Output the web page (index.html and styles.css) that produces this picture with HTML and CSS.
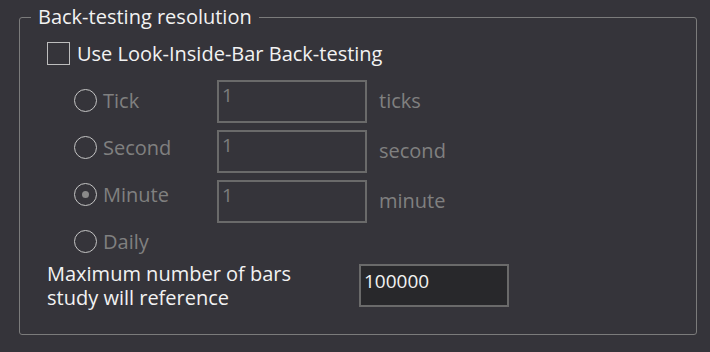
FILE: index.html
```html
<!DOCTYPE html>
<html lang="en">

<head>
    <meta charset="UTF-8">
    <title>Back-testing resolution</title>
    <link rel="stylesheet" href="styles.css">
</head>

<body>

    <fieldset class="group">
        <legend>Back-testing resolution</legend>

        <!-- Look inside bar -->
        <label class="check-row">
            <span class="checkbox"></span>
            <span>Use Look-Inside-Bar Back-testing</span>
        </label>

        <!-- Resolution options (disabled) -->
        <div class="modes">
            <div class="radios">
                <div class="radio-item"><span class="radio"></span>Tick</div>
                <div class="radio-item"><span class="radio"></span>Second</div>
                <div class="radio-item"><span class="radio checked"></span>Minute</div>
                <div class="radio-item"><span class="radio"></span>Daily</div>
            </div>
            <div class="fields">
                <div class="field-row"><div class="box">1</div><span class="unit">ticks</span></div>
                <div class="field-row"><div class="box">1</div><span class="unit">second</span></div>
                <div class="field-row"><div class="box">1</div><span class="unit">minute</span></div>
            </div>
        </div>

        <!-- Max bars -->
        <div class="max-row">
            <div class="max-label">Maximum number of bars<br>study will reference</div>
            <div class="box active">100000</div>
        </div>
    </fieldset>

</body>

</html>
```

FILE: styles.css
```css
html {
    background: #35343a;
}

body {
    margin: 0;
    padding: 5px 13px 0 19px;
    font-family: "Open Sans", "Noto Sans", sans-serif;
    font-size: 20px;
    color: #f2f2f2;
}

.group {
    margin: 0;
    height: 330px;
    padding: 0 0 0 11px;
    border: 1px solid #7b7b7b;
    border-radius: 3px;
    box-sizing: border-box;
}

.group legend {
    padding: 0 7px;
    line-height: 24px;
}

/* Checkbox row */
.check-row {
    display: flex;
    align-items: center;
    gap: 7px;
    margin: 13px 0 0 16px;
    height: 23px;
}

.checkbox {
    width: 23px;
    height: 23px;
    box-sizing: border-box;
    border: 1px solid #bdbdbd;
}

/* Radio + fields */
.modes {
    display: flex;
    margin-left: 43px;
}

.radios {
    display: flex;
    flex-direction: column;
    gap: 24px;
    margin-top: 24px;
    width: 143px;
}

.radio-item {
    display: flex;
    align-items: center;
    gap: 6px;
    height: 23px;
    color: #808080;
}

.radio {
    width: 23px;
    height: 23px;
    box-sizing: border-box;
    border: 1px solid #c4c4c4;
    border-radius: 50%;
    display: flex;
    align-items: center;
    justify-content: center;
}

.radio.checked::after {
    content: "";
    width: 7px;
    height: 7px;
    border-radius: 50%;
    background: #8a8a8a;
}

.fields {
    display: flex;
    flex-direction: column;
    gap: 7px;
    margin-top: 15px;
}

.field-row {
    display: flex;
    align-items: center;
    gap: 12px;
}

.box {
    width: 150px;
    height: 43px;
    box-sizing: border-box;
    border: 2px solid #6a6a6a;
    padding: 2px 0 0 3px;
    font-size: 19px;
    line-height: 22px;
    color: #7d7d7d;
}

.unit {
    color: #808080;
    margin-top: -3px;
}

/* Max bars row */
.max-row {
    display: flex;
    align-items: flex-start;
    margin: 9px 0 0 16px;
}

.max-label {
    width: 312px;
    line-height: 24px;
}

.box.active {
    margin-top: 2px;
    background: #28282b;
    color: #f2f2f2;
    padding-top: 4px;
}
```
